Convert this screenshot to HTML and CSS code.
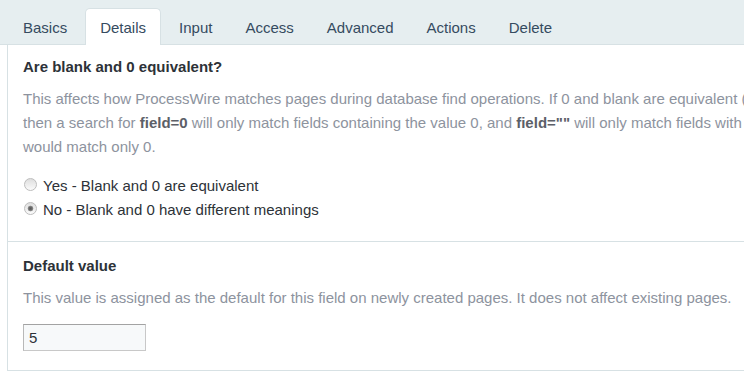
FILE: index.html
```html
<!DOCTYPE html>
<html lang="en">
<head>
    <meta charset="UTF-8">
    <meta name="viewport" content="width=device-width, initial-scale=1.0">
    <title>Edit Field</title>
    <link rel="stylesheet" href="styles.css">
</head>
<body>
    <div class="tabs">
        <ul class="tab-list">
            <li class="tab">Basics</li>
            <li class="tab active">Details</li>
            <li class="tab">Input</li>
            <li class="tab">Access</li>
            <li class="tab">Advanced</li>
            <li class="tab">Actions</li>
            <li class="tab">Delete</li>
        </ul>
    </div>

    <div class="panel">
        <div class="field">
            <div class="field-label">Are blank and 0 equivalent?</div>
            <p class="notes">
                This affects how ProcessWire matches pages during database find operations. If 0 and blank are equivalent (Yes),<br>
                then a search for <strong>field=0</strong> will only match fields containing the value 0, and <strong>field=""</strong> will only match fields with no value. Otherwise field=0<br>
                would match only 0.
            </p>
            <ul class="radios">
                <li><label><input type="radio" name="zeroNotEmpty"> Yes - Blank and 0 are equivalent</label></li>
                <li><label><input type="radio" name="zeroNotEmpty" checked> No - Blank and 0 have different meanings</label></li>
            </ul>
        </div>

        <div class="field last">
            <div class="field-label">Default value</div>
            <p class="notes">This value is assigned as the default for this field on newly created pages. It does not affect existing pages.</p>
            <input type="text" class="text-input" value="5">
        </div>
    </div>
</body>
</html>
```

FILE: styles.css
```css
body {
    font-family: "Liberation Sans", Arial, sans-serif;
    font-size: 15px;
    color: #333;
    background-color: #fff;
    margin: 0;
    padding: 0;
    overflow: hidden;
}
.tabs {
    background-color: #e6eef0;
    border-bottom: 1px solid #d7e1e4;
    height: 44px;
    padding-left: 8px;
}
.tab-list {
    display: flex;
    align-items: flex-end;
    height: 44px;
    margin: 0;
    padding: 0;
    list-style: none;
}
.tab {
    box-sizing: border-box;
    height: 37px;
    line-height: 32px;
    padding: 3px 14px 0;
    margin: 0 3px -1px 0;
    border: 1px solid transparent;
    border-bottom: none;
    border-radius: 5px 5px 0 0;
    color: #354b60;
    white-space: nowrap;
}
.tab.active {
    background-color: #fff;
    border-color: #d7e1e4;
}
.panel {
    width: 1100px;
    margin-left: 7px;
    border-left: 1px solid #d7e1e4;
    border-bottom: 1px solid #d7e1e4;
}
.field {
    padding: 10px 15px 19px;
    border-bottom: 1px solid #d7e1e4;
}
.field.last {
    padding-top: 12px;
    border-bottom: none;
}
.field-label {
    font-weight: bold;
    line-height: 24px;
    color: #2d3238;
}
.notes {
    margin: 8px 0 0;
    line-height: 24px;
    color: #8d939e;
}
.notes strong {
    color: #5c6068;
}
.radios {
    list-style: none;
    margin: 15px 0 0;
    padding: 0;
}
.radios li {
    line-height: 24px;
}
.radios label {
    display: flex;
    align-items: flex-start;
    color: #2d3238;
}
.radios input {
    appearance: none;
    -webkit-appearance: none;
    width: 13px;
    height: 13px;
    margin: 4px 6px 0 1px;
    border: 1px solid #bdbdbd;
    border-radius: 50%;
    background: linear-gradient(#dedede, #fbfbfb);
}
.radios input:checked {
    background: radial-gradient(circle, #5a5a5a 0, #6a6a6a 1.5px, #909090 2.5px, transparent 3.2px), linear-gradient(#dedede, #fbfbfb);
}
.text-input {
    display: block;
    box-sizing: border-box;
    width: 123px;
    height: 27px;
    margin-top: 14px;
    padding: 0 5px;
    border: 1px solid #c8c8c8;
    border-top-color: #a3a3a3;
    border-left-color: #b8b8b8;
    background-color: #f7f9fa;
    font-family: inherit;
    font-size: 15px;
    color: #2d3238;
}
```
